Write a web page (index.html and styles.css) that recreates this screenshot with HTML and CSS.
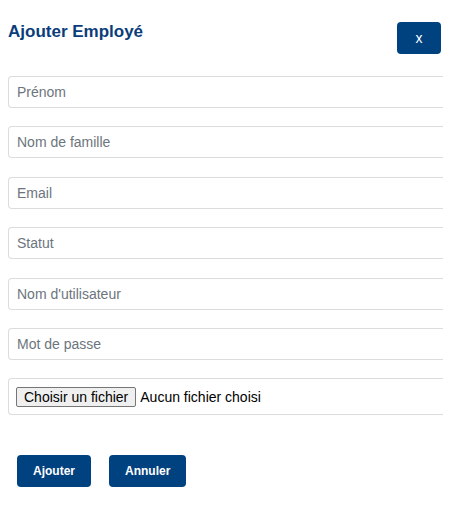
FILE: index.html
```html
<!DOCTYPE html>
<html lang="fr">
<head>
<meta charset="utf-8">
<title>Ajouter Employé</title>
<link rel="stylesheet" href="styles.css">
</head>
<body>
<div class="modal">
  <div class="modal-header">
    <h2 class="modal-title">Ajouter Employé</h2>
    <button class="btn btn-close" type="button">x</button>
  </div>
  <form class="form">
    <input class="field" type="text" placeholder="Prénom">
    <input class="field" type="text" placeholder="Nom de famille">
    <input class="field" type="email" placeholder="Email">
    <input class="field" type="text" placeholder="Statut">
    <input class="field" type="text" placeholder="Nom d'utilisateur">
    <input class="field" type="password" placeholder="Mot de passe">
    <div class="field file-field">
      <span class="file-btn">Choisir un fichier</span>
      <span class="file-name">Aucun fichier choisi</span>
    </div>
    <div class="actions">
      <button class="btn btn-action" type="button">Ajouter</button>
      <button class="btn btn-action" type="button">Annuler</button>
    </div>
  </form>
</div>
</body>
</html>
```
FILE: styles.css
```css
html {
  background: #ffffff;
}
body {
  margin: 8px;
  font-family: "Liberation Sans", Arial, sans-serif;
  background: #ffffff;
}
.modal {
  margin-right: -8px;
}
.modal-header {
  display: flex;
  justify-content: space-between;
  align-items: flex-start;
  padding-top: 14px;
  margin-right: 10px;
}
.modal-title {
  margin: 0;
  font-size: 17px;
  line-height: 20px;
  font-weight: bold;
  color: #0a3d7a;
}
.btn {
  border: none;
  background: #00417f;
  color: #ffffff;
  border-radius: 4px;
  font-family: "Liberation Sans", Arial, sans-serif;
  cursor: pointer;
}
.btn-close {
  width: 44px;
  height: 32px;
  font-size: 14px;
  padding: 0;
}
.form {
  display: flex;
  flex-direction: column;
  margin-top: 22px;
}
.field {
  box-sizing: border-box;
  height: 32px;
  margin: 0 0 18.4px 0;
  padding: 0 8px;
  border: 1px solid #dcdcdc;
  border-right: none;
  border-radius: 4px 0 0 4px;
  font-family: "Liberation Sans", Arial, sans-serif;
  font-size: 14px;
  color: #333;
  outline: none;
}
.field::placeholder {
  color: #6c757d;
}
.file-field {
  display: flex;
  align-items: center;
  height: 36.5px;
  padding: 0 7px;
  color: #000;
}
.file-btn {
  box-sizing: border-box;
  height: 20px;
  line-height: 18px;
  padding: 0 7px;
  border: 1px solid #767676;
  background: #efefef;
  border-radius: 2px;
  font-size: 14px;
  color: #000;
}
.file-name {
  margin-left: 4px;
  font-size: 14px;
  color: #000;
}
.actions {
  display: flex;
  gap: 18px;
  padding-left: 9px;
  margin-top: 21.6px;
}
.btn-action {
  height: 32px;
  padding: 0 16px;
  font-size: 12px;
  font-weight: bold;
}
```
